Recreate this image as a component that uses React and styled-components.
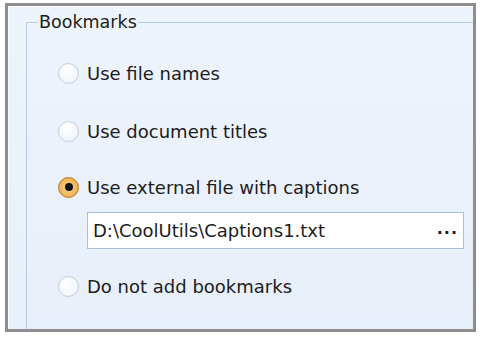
import React from 'react';
import styled, { createGlobalStyle } from 'styled-components';

const GlobalStyle = createGlobalStyle`
  body {
    margin: 0;
    background: #ffffff;
    font-family: "DejaVu Sans", "Liberation Sans", sans-serif;
  }
`;

const Frame = styled.div`
  margin: 3px 0 0 5px;
  width: 447px;
  height: 317px;
  border: 3px solid #8e8e8e;
  background: linear-gradient(#eef4fc, #e7effa);
  overflow: hidden;
  padding: 6px 0 0 18px;
  box-sizing: content-box;
  box-shadow: inset 1px 1px 0 #f8fbff;
`;

const GroupBox = styled.fieldset`
  margin: 0;
  width: 470px;
  height: 340px;
  border: 1px solid #b6cae6;
  padding: 0 0 0 31px;
  box-sizing: border-box;
`;

const Legend = styled.legend`
  margin-left: -20px;
  padding: 0 1px;
  font-size: 17.5px;
  line-height: 20px;
  color: #1c1c1c;
`;

const Options = styled.div`
  display: flex;
  flex-direction: column;
  padding-top: 29px;
`;

const Option = styled.label`
  display: flex;
  align-items: center;
  gap: 8px;
  height: 24px;
  margin-top: ${(p) => p.$top || 0}px;
  font-size: 18px;
  color: #1c1c1c;
`;

const Radio = styled.span`
  flex: none;
  width: 21px;
  height: 21px;
  border-radius: 50%;
  box-sizing: border-box;
  display: flex;
  align-items: center;
  justify-content: center;
  border: 1px solid ${(p) => (p.$checked ? '#b27a2c' : '#c3cedb')};
  background: ${(p) =>
    p.$checked
      ? 'radial-gradient(circle, #fbd9a0 0%, #f0b04f 70%, #e39a35 100%)'
      : 'radial-gradient(circle at 40% 35%, #ffffff 0%, #f1f5fa 70%, #e4ebf3 100%)'};

  &::after {
    content: '';
    display: ${(p) => (p.$checked ? 'block' : 'none')};
    width: 8px;
    height: 8px;
    border-radius: 50%;
    background: #111;
  }
`;

const PathBox = styled.div`
  display: flex;
  align-items: center;
  justify-content: space-between;
  margin: 13px 0 0 29px;
  width: 377px;
  height: 37px;
  box-sizing: border-box;
  border: 1px solid #aabfd9;
  background: #ffffff;
  padding: 0 5px 0 5px;
  font-size: 18px;
  color: #1c1c1c;
`;

const Dots = styled.span`
  font-weight: bold;
  font-size: 16px;
  letter-spacing: 1px;
  padding-bottom: 4px;
`;

const App = () => {
  return (
    <>
      <GlobalStyle />
      <Frame>
        <GroupBox>
          <Legend>Bookmarks</Legend>
          <Options>
            <Option>
              <Radio />
              Use file names
            </Option>
            <Option $top={34}>
              <Radio />
              Use document titles
            </Option>
            <Option $top={32}>
              <Radio $checked />
              Use external file with captions
            </Option>
            <PathBox>
              <span>D:\CoolUtils\Captions1.txt</span>
              <Dots>...</Dots>
            </PathBox>
            <Option $top={25}>
              <Radio />
              Do not add bookmarks
            </Option>
          </Options>
        </GroupBox>
      </Frame>
    </>
  );
};

export default App;
